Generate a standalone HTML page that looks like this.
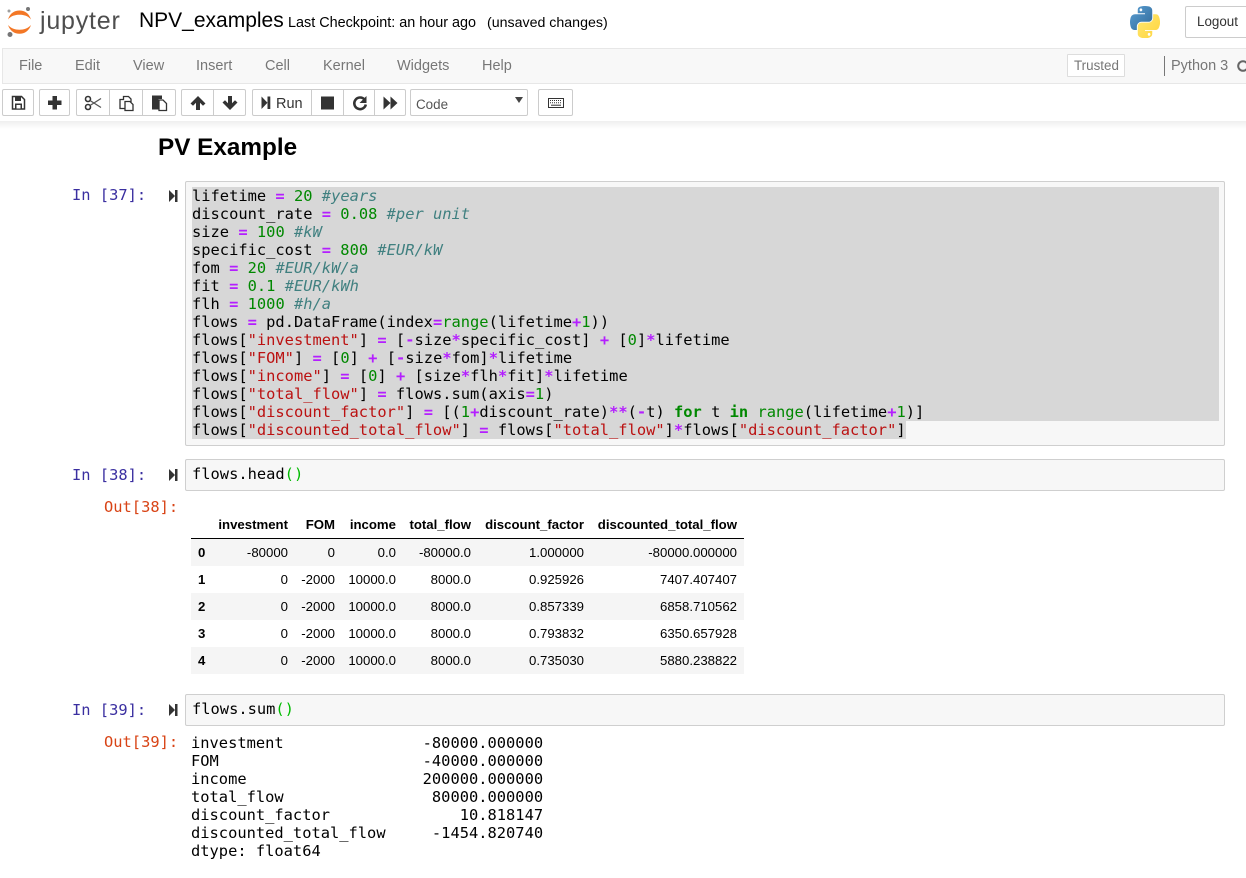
<!DOCTYPE html>
<html><head><meta charset="utf-8"><style>
html,body{margin:0;padding:0;background:#fff;width:1246px;height:878px;overflow:hidden;position:relative;font-family:"Liberation Sans",sans-serif;color:#000}
.a{position:absolute;white-space:pre}
.btn{position:absolute;top:89px;height:25px;background:#fff;border:1px solid #ccc;box-sizing:content-box;border-radius:2px}
.btn svg{position:absolute;left:0;top:0}
.m{font-size:14.5px;color:#777;top:57px;line-height:18px}
pre,.mono{font-family:"DejaVu Sans Mono",monospace;font-size:15.4px;line-height:18px;margin:0}
.box{position:absolute;left:185px;width:1038px;background:#f7f7f7;border:1px solid #cfcfcf;border-radius:2px}
.p{position:absolute;font-family:"DejaVu Sans Mono",monospace;font-size:15.4px;line-height:18px;white-space:pre}
.in{color:#3a2fa0}.out{color:#d84315}
i.o{font-style:normal;color:#b41fff;font-weight:bold}
i.n{font-style:normal;color:#080}
i.c{font-style:italic;color:#408080}
i.s{font-style:normal;color:#b11}
i.k{font-style:normal;color:#080;font-weight:bold}
i.b{font-style:normal;color:#080}
i.g{font-style:normal;color:#0b0}
table{position:absolute;left:191px;top:511px;border-collapse:collapse;table-layout:fixed;width:553px;font-size:13.2px;color:#000}
th,td{padding:0 7px 0 0;text-align:right;height:27px;box-sizing:border-box;font-weight:normal;line-height:27px;overflow:visible;white-space:nowrap}
th{font-weight:bold}
thead th{border-bottom:1px solid #000;height:27px;line-height:27px}
tbody th{text-align:left;padding-left:7px}
tr.e{background:#f5f5f5}
</style></head><body>

<!-- header -->
<svg class="a" style="left:0;top:0" width="40" height="42" viewBox="0 0 40 42">
<path d="M8 19.5C10 13 14.500 10.500 19.500 10.500S29 13 31 19.500C28 16 24 14.800 19.500 14.800S11 16 8 19.500Z" fill="#f37726"/>
<path d="M8 25C10 31 14.500 33.800 19.500 33.800S29 31 31 25C28 28.400 24 29.700 19.500 29.700S11 28.400 8 25Z" fill="#f37726"/>
<circle cx="28" cy="9" r="2" fill="#767677"/><circle cx="9" cy="11" r="1.500" fill="#9e9e9e"/><circle cx="10" cy="34.500" r="2.500" fill="#767677"/>
</svg>
<div class="a" style="left:40px;top:4px;font-size:25px;line-height:34px;color:#4e4e4e;letter-spacing:.8px">jupyter</div>
<div class="a" style="left:139px;top:8px;font-size:21px;line-height:26px">NPV_examples</div>
<div class="a" style="left:288px;top:14px;font-size:14.4px;line-height:18px">Last Checkpoint: an hour ago</div>
<div class="a" style="left:487px;top:14px;font-size:14.2px;line-height:18px">(unsaved changes)</div>
<svg class="a" style="left:1130px;top:6px" width="30" height="32" viewBox="0 0 111 111" preserveAspectRatio="none">
<defs><linearGradient id="bl" x1="0" y1="0" x2="1" y2="1"><stop offset="0" stop-color="#5a9fd4"/><stop offset="1" stop-color="#306998"/></linearGradient>
<linearGradient id="ye" x1="0" y1="0" x2="1" y2="1"><stop offset="0" stop-color="#ffe873"/><stop offset="1" stop-color="#ffd43b"/></linearGradient></defs>
<path fill="url(#bl)" d="M54.919 0c-4.584.021-8.961.412-12.812 1.094C30.761 3.098 28.7 7.3 28.7 15.031V25.25h26.813v3.406H18.638c-7.793 0-14.616 4.684-16.75 13.594-2.462 10.213-2.571 16.586 0 27.25 1.906 7.938 6.457 13.594 14.25 13.594h9.219V71.344c0-8.85 7.657-16.656 16.75-16.656h26.781c7.455 0 13.406-6.138 13.406-13.625V15.031c0-7.266-6.13-12.725-13.406-13.937C64.282.328 59.502-.02 54.919 0zM40.419 8.219c2.77 0 5.031 2.299 5.031 5.125 0 2.816-2.262 5.094-5.031 5.094-2.779 0-5.031-2.278-5.031-5.094 0-2.826 2.252-5.125 5.031-5.125z"/>
<path fill="url(#ye)" d="M85.638 28.656v11.906c0 9.231-7.826 17-16.75 17H42.106c-7.336 0-13.406 6.278-13.406 13.625v25.531c0 7.266 6.319 11.54 13.406 13.625 8.487 2.496 16.626 2.947 26.781 0 6.75-1.954 13.406-5.888 13.406-13.625V86.5H55.513v-3.406h40.187c7.793 0 10.696-5.436 13.406-13.594 2.8-8.399 2.68-16.476 0-27.25-1.926-7.757-5.604-13.594-13.406-13.594zM70.575 93.312c2.779 0 5.031 2.278 5.031 5.094 0 2.826-2.252 5.125-5.031 5.125-2.77 0-5.031-2.299-5.031-5.125 0-2.816 2.262-5.094 5.031-5.094z"/>
</svg>
<div class="a" style="left:1185px;top:6px;width:70px;height:30px;border:1px solid #ccc;border-radius:2px;box-sizing:content-box;background:#fff"></div>
<div class="a" style="left:1197px;top:13px;font-size:13.4px;line-height:18px;color:#333">Logout</div>

<!-- menubar -->
<div class="a" style="left:2px;top:48px;width:1250px;height:34px;background:#f8f8f8;border:1px solid #e7e7e7"></div>
<div class="a m" style="left:19px">File</div>
<div class="a m" style="left:75px">Edit</div>
<div class="a m" style="left:133px">View</div>
<div class="a m" style="left:196px">Insert</div>
<div class="a m" style="left:265px">Cell</div>
<div class="a m" style="left:323px">Kernel</div>
<div class="a m" style="left:397px">Widgets</div>
<div class="a m" style="left:482px">Help</div>
<div class="a" style="left:1067px;top:54px;width:56px;height:21px;border:1px solid #ddd;background:#fff;border-radius:1px"></div>
<div class="a" style="left:1074px;top:56px;font-size:13.4px;line-height:19px;color:#777">Trusted</div>
<div class="a" style="left:1164px;top:56px;width:1px;height:20px;background:#777"></div>
<div class="a m" style="left:1171px">Python 3</div>
<svg class="a" style="left:1236px;top:59px" width="12" height="14"><circle cx="7" cy="7" r="4.800" fill="none" stroke="#666" stroke-width="2"/></svg>

<!-- toolbar -->
<div class="btn" style="left:2px;width:30px"><svg width="30" height="25"><path d="M9.500 6.500h9l3 3v9.500h-12z" fill="none" stroke="#333" stroke-width="1.500"/><path d="M12 6.500h6v4.500h-6zM12 13.500h7v5h-7z" fill="#333"/><rect x="13.500" y="15" width="4" height="3.500" fill="#fff"/></svg></div>
<div class="btn" style="left:39px;width:29px"><svg width="29" height="25"><path d="M12.500 6h4.500v4.500h4.500v4.500h-4.500v4.500h-4.500v-4.500h-4.500v-4.500h4.500z" fill="#333"/></svg></div>
<div class="btn" style="left:76px;width:33px;border-radius:2px 0 0 2px"><svg width="33" height="25"><circle cx="11" cy="9" r="2.500" fill="none" stroke="#333" stroke-width="1.600"/><circle cx="11" cy="17" r="2.500" fill="none" stroke="#333" stroke-width="1.600"/><path d="M13 10.500l11 7M13 15.500l11-7" stroke="#555" stroke-width="1.300" fill="none"/></svg></div>
<div class="btn" style="left:109px;width:33px;border-radius:0"><svg width="33" height="25"><path d="M13.500 10V6.500h5l2.500 2.500v3" fill="none" stroke="#333" stroke-width="1.300"/><path d="M14 9.500h-4v9h5" fill="none" stroke="#333" stroke-width="1.300"/><path d="M15 11.500h5l3 3v6h-8z" fill="#fff" stroke="#333" stroke-width="1.300"/></svg></div>
<div class="btn" style="left:142px;width:32px;border-radius:0 2px 2px 0"><svg width="32" height="25"><path d="M9 5.500h10v3.500h-3.500v10.500h-6.500z" fill="#333"/><path d="M16 10h4l3.500 3.500v7h-7.500z" fill="#fff" stroke="#333" stroke-width="1.300"/></svg></div>
<div class="btn" style="left:181px;width:31px;border-radius:2px 0 0 2px"><svg width="31" height="25"><path d="M16 6l7.500 7.500-2.500 2.300-3-3v7.200h-4v-7.200l-3 3-2.500-2.300z" fill="#333"/></svg></div>
<div class="btn" style="left:213px;width:31px;border-radius:0 2px 2px 0"><svg width="31" height="25"><path d="M16 20l7.500-7.500-2.500-2.300-3 3V6h-4v7.200l-3-3-2.500 2.300z" fill="#333"/></svg></div>
<div class="btn" style="left:252px;width:58px;border-radius:2px 0 0 2px"><svg width="20" height="25"><path d="M8.500 6.500v12.500l6-6.250z" fill="#333"/><rect x="14.500" y="6.500" width="2.800" height="12.500" fill="#333"/></svg></div>
<div class="a" style="left:276px;top:95px;font-size:14.5px;line-height:18px;color:#333">Run</div>
<div class="btn" style="left:311px;width:31px;border-radius:0"><svg width="31" height="25"><rect x="9" y="6.500" width="13" height="13" fill="#333"/></svg></div>
<div class="btn" style="left:343px;width:30px;border-radius:0"><svg width="30" height="25"><path d="M20.500 9.500a5.800 5.800 0 1 0 1.300 5" fill="none" stroke="#333" stroke-width="2.600"/><path d="M22.500 6v7h-7z" fill="#333"/></svg></div>
<div class="btn" style="left:374px;width:30px;border-radius:0 2px 2px 0"><svg width="30" height="25"><path d="M8.500 6.500v13l7-6.500zM15.500 6.500v13l7-6.500z" fill="#333"/></svg></div>
<div class="btn" style="left:410px;width:116px"></div>
<div class="a" style="left:416px;top:96px;font-size:13.400px;line-height:18px;color:#555">Code</div>
<svg class="a" style="left:514px;top:96px" width="10" height="8"><path d="M1 1h8l-4 6z" fill="#444"/></svg>
<div class="btn" style="left:538px;width:33px"><svg width="33" height="25"><rect x="9.500" y="8.500" width="15" height="9" fill="#fff" stroke="#333"/><path d="M11 10.500h12M11 12.700h12" stroke="#333" stroke-dasharray="1 1"/><path d="M12 15.200h10" stroke="#333"/></svg></div>
<div class="a" style="left:0;top:121px;width:1246px;height:8px;background:linear-gradient(#efefef,#fff)"></div>

<!-- content -->
<div class="a" style="left:158px;top:133px;font-size:24.3px;line-height:30px;font-weight:bold">PV Example</div>

<!-- cell 37 -->
<div class="p in" style="left:72px;top:186px">In [37]:</div>
<svg class="a" style="left:167px;top:189px" width="12" height="14"><path d="M2 1v12l6-6z" fill="#333"/><rect x="8" y="1" width="2.500" height="12" fill="#333"/></svg>
<div class="box" style="top:181px;height:263px"></div>
<div class="a" style="left:192px;top:187px;width:1027px;height:234px;background:#d7d7d7"></div>
<div class="a" style="left:192px;top:421px;width:714px;height:18px;background:#d7d7d7"></div>
<pre class="a" style="left:192px;top:187px">lifetime <i class="o">=</i> <i class="n">20</i> <i class="c">#years</i>
discount_rate <i class="o">=</i> <i class="n">0.08</i> <i class="c">#per unit</i>
size <i class="o">=</i> <i class="n">100</i> <i class="c">#kW</i>
specific_cost <i class="o">=</i> <i class="n">800</i> <i class="c">#EUR/kW</i>
fom <i class="o">=</i> <i class="n">20</i> <i class="c">#EUR/kW/a</i>
fit <i class="o">=</i> <i class="n">0.1</i> <i class="c">#EUR/kWh</i>
flh <i class="o">=</i> <i class="n">1000</i> <i class="c">#h/a</i>
flows <i class="o">=</i> pd.DataFrame(index<i class="o">=</i><i class="b">range</i>(lifetime<i class="o">+</i><i class="n">1</i>))
flows[<i class="s">"investment"</i>] <i class="o">=</i> [<i class="o">-</i>size<i class="o">*</i>specific_cost] <i class="o">+</i> [<i class="n">0</i>]<i class="o">*</i>lifetime
flows[<i class="s">"FOM"</i>] <i class="o">=</i> [<i class="n">0</i>] <i class="o">+</i> [<i class="o">-</i>size<i class="o">*</i>fom]<i class="o">*</i>lifetime
flows[<i class="s">"income"</i>] <i class="o">=</i> [<i class="n">0</i>] <i class="o">+</i> [size<i class="o">*</i>flh<i class="o">*</i>fit]<i class="o">*</i>lifetime
flows[<i class="s">"total_flow"</i>] <i class="o">=</i> flows.sum(axis<i class="o">=</i><i class="n">1</i>)
flows[<i class="s">"discount_factor"</i>] <i class="o">=</i> [(<i class="n">1</i><i class="o">+</i>discount_rate)<i class="o">**</i>(<i class="o">-</i>t) <i class="k">for</i> t <i class="k">in</i> <i class="b">range</i>(lifetime<i class="o">+</i><i class="n">1</i>)]
flows[<i class="s">"discounted_total_flow"</i>] <i class="o">=</i> flows[<i class="s">"total_flow"</i>]<i class="o">*</i>flows[<i class="s">"discount_factor"</i>]</pre>

<!-- cell 38 -->
<div class="p in" style="left:72px;top:466px">In [38]:</div>
<svg class="a" style="left:167px;top:468px" width="12" height="14"><path d="M2 1v12l6-6z" fill="#333"/><rect x="8" y="1" width="2.500" height="12" fill="#333"/></svg>
<div class="box" style="top:459px;height:30px"></div>
<pre class="a" style="left:192px;top:465px">flows.head<i class="g">()</i></pre>
<div class="p out" style="left:104px;top:498px">Out[38]:</div>

<table>
<colgroup><col style="width:21px"><col style="width:83px"><col style="width:47px"><col style="width:61px"><col style="width:75px"><col style="width:113px"><col style="width:153px"></colgroup>
<thead><tr><th></th><th>investment</th><th>FOM</th><th>income</th><th>total_flow</th><th>discount_factor</th><th>discounted_total_flow</th></tr></thead>
<tbody>
<tr class="e"><th>0</th><td>-80000</td><td>0</td><td>0.0</td><td>-80000.0</td><td>1.000000</td><td>-80000.000000</td></tr>
<tr><th>1</th><td>0</td><td>-2000</td><td>10000.0</td><td>8000.0</td><td>0.925926</td><td>7407.407407</td></tr>
<tr class="e"><th>2</th><td>0</td><td>-2000</td><td>10000.0</td><td>8000.0</td><td>0.857339</td><td>6858.710562</td></tr>
<tr><th>3</th><td>0</td><td>-2000</td><td>10000.0</td><td>8000.0</td><td>0.793832</td><td>6350.657928</td></tr>
<tr class="e"><th>4</th><td>0</td><td>-2000</td><td>10000.0</td><td>8000.0</td><td>0.735030</td><td>5880.238822</td></tr>
</tbody></table>

<!-- cell 39 -->
<div class="p in" style="left:72px;top:701px">In [39]:</div>
<svg class="a" style="left:167px;top:703px" width="12" height="14"><path d="M2 1v12l6-6z" fill="#333"/><rect x="8" y="1" width="2.500" height="12" fill="#333"/></svg>
<div class="box" style="top:694px;height:30px"></div>
<pre class="a" style="left:192px;top:700px">flows.sum<i class="g">()</i></pre>
<div class="p out" style="left:104px;top:733px">Out[39]:</div>
<pre class="a" style="left:191px;top:734px">investment               -80000.000000
FOM                      -40000.000000
income                   200000.000000
total_flow                80000.000000
discount_factor              10.818147
discounted_total_flow     -1454.820740
dtype: float64</pre>
</body></html>
